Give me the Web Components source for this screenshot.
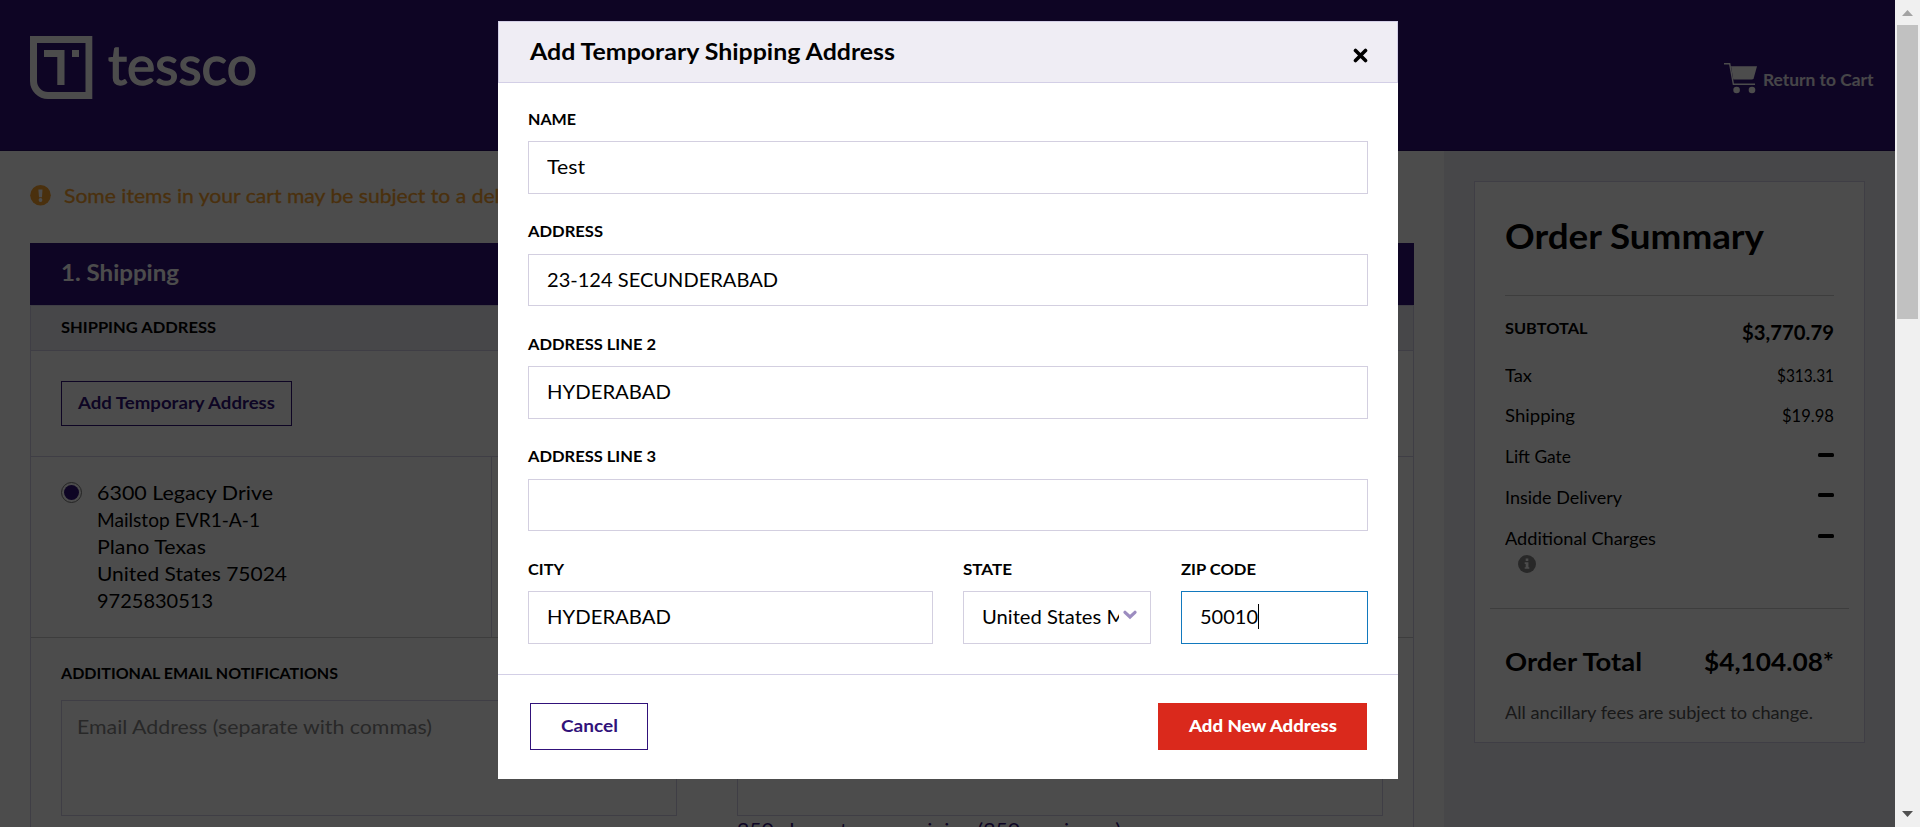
<!DOCTYPE html>
<html lang="en">
<head>
<meta charset="utf-8">
<title>Tessco Checkout</title>
<style>
html,body{margin:0;height:827px;overflow:hidden;background:#fff}
body{font-family:Lato,"Open Sans",sans-serif;color:#000;font-size:20px}
</style>
</head>
<body>
<checkout-app></checkout-app>
<script>
const define = (name, html, ready) => {
  const t = document.createElement('template');
  t.innerHTML = html;
  customElements.define(name, class extends HTMLElement {
    connectedCallback() {
      if (this.shadowRoot) return;
      this.attachShadow({mode:'open'}).append(t.content.cloneNode(true));
      if (ready) ready(this, this.shadowRoot);
    }
  });
};

// Stretches a run of text to the requested width.
define('fit-text', `<style>:host{display:block;white-space:pre;flex:none}span{display:inline-block;transform-origin:0 50%;vertical-align:top}</style><span><slot></slot></span>`,
  (el, root) => {
    const s = root.querySelector('span');
    const w = +el.getAttribute('w');
    const natural = s.getBoundingClientRect().width;
    el.style.width = w + 'px';
    s.style.transform = 'scaleX(' + w / natural + ')';
  });

define('ui-button', `<style>
:host{display:flex;box-sizing:border-box;align-items:center;justify-content:center;border:1px solid #31127a;color:#31127a;font-weight:700;font-size:17.5px;line-height:20px;padding-bottom:1px}
:host([primary]){background:#da291c;border-color:#da291c;color:#fff;font-weight:900}
</style><slot></slot>`);

define('site-header', `<style>
:host{display:flex;box-sizing:border-box;height:151px;background:#31127a;padding:36px 22px 0 30px;color:#fff;border-bottom:1px solid #260c63}
.mark{display:block;width:63px;height:63px}
.word{font-size:54px;line-height:60px;font-weight:400;-webkit-text-stroke:1.3px #fff;margin:-1px 0 0 15px}
.cart{display:flex;margin:27px 0 0 auto;height:31px}
.cart fit-text{font-size:17.5px;font-weight:700;line-height:20px;margin:7px 0 0 6px;color:#ece9f2}
</style>
<svg class="mark" viewBox="0 0 63 63" fill="#fff"><path fill-rule="evenodd" d="M0 0H62.3V63H18A18 18 0 0 1 0 45ZM7 7V45A11 11 0 0 0 18 56H55.5V7Z"/><path d="M14 14H34.5V49H27.3V21H14ZM42 14H49V21H42Z"/></svg>
<fit-text class="word" w="149">tessco</fit-text>
<div class="cart">
<svg width="33" height="31" viewBox="0 0 33 31" fill="#fff"><path d="M0 .8H5.7L9.4 21.3H31" fill="none" stroke="#fff" stroke-width="1.4"/><path d="M7 3.3H33L29.7 15.2Q29.2 16.6 27.5 16.6H9.3Z"/><circle cx="12.6" cy="27" r="3.3"/><circle cx="28" cy="27" r="3.3"/></svg>
<fit-text w="110.5">Return to Cart</fit-text></div>`);

define('cart-alert', `<style>
:host{display:flex;height:92px;box-sizing:border-box;padding-top:34px;color:#f7a12d}
fit-text{margin-left:12.5px;line-height:26px;margin-top:-3px;-webkit-text-stroke:.3px #f7a12d}
</style>
<svg width="21" height="21" viewBox="0 0 21 21"><circle cx="10.5" cy="10.3" r="10.3" fill="#f7a12d"/><path d="M8.4 4.6H12.5L12 12.2H9Z" fill="#fff"/><circle cx="10.5" cy="15" r="1.9" fill="#fff"/></svg>
<fit-text w="461">Some items in your cart may be subject to a delay.</fit-text>`);

define('shipping-panel', `<style>
:host{display:flex;flex-direction:column;height:700px;color:#000}
.bar{background:#31127a;color:#fff;height:62px;box-sizing:border-box;padding:17px 31px;font-size:22.5px;font-weight:700;line-height:26px}
.box{flex:1;border:1px solid #d3cfe6;display:flex;flex-direction:column}
.sub{height:44px;background:#efedf4;border-bottom:1px solid #d3cfe6;padding-left:30px;font-size:16px;font-weight:700;line-height:41px;flex:none;box-sizing:border-box;height:45px}
.add{height:105px;border-bottom:1px solid #d3cfe6;flex:none;padding-left:30px}
ui-button{width:231px;height:45px;margin-top:30px}
.list{display:grid;grid-template-columns:461px 1fr;height:180px;border-bottom:1px solid #ccc;flex:none}
.card{display:flex;border-right:1px solid #d3cfe6;padding:22px 0 0 30px}
.lines{display:flex;flex-direction:column;align-items:flex-start;line-height:27px;margin-left:15px}
.radio{width:21px;height:21px;box-sizing:border-box;border:1px solid #767676;border-radius:50%;display:grid;place-items:center;margin-top:3px}
.radio i{width:15px;height:15px;border-radius:50%;background:#31127a}
.notes{display:grid;grid-template-columns:616px 646px;column-gap:60px;padding:25px 30px 0;align-items:start}
.lab{height:37px;font-size:16px;font-weight:700;line-height:20px}
.area{height:116px;box-sizing:border-box;border:1px solid #d3cfe6;padding:12px 15px;color:#888;line-height:26px}
.count{line-height:26px;color:#31127a}
</style>
<div class="bar"><fit-text w="118">1. Shipping</fit-text></div>
<div class="box">
<div class="sub"><fit-text w="155">SHIPPING ADDRESS</fit-text></div>
<div class="add"><ui-button><fit-text w="197">Add Temporary Address</fit-text></ui-button></div>
<div class="list"><div class="card"><span class="radio"><i></i></span><div class="lines">
<fit-text w="176">6300 Legacy Drive</fit-text><fit-text w="163">Mailstop EVR1-A-1</fit-text><fit-text w="109">Plano Texas</fit-text><fit-text w="190">United States 75024</fit-text><fit-text w="116">9725830513</fit-text></div></div></div>
<div class="notes"><div><div class="lab"><fit-text w="277">ADDITIONAL EMAIL NOTIFICATIONS</fit-text></div><div class="area"><fit-text w="355">Email Address (separate with commas)</fit-text></div></div>
<div><div class="lab"></div><div class="area"></div><div class="count"><fit-text w="384">250 characters remaining (250 maximum)</fit-text></div></div></div>
</div>`);

define('summary-row', `<style>
:host{display:flex;justify-content:space-between;font-size:17px;line-height:20px;height:40.8px}
i{width:16px;height:4px;border-radius:1.5px;background:#000;margin-top:5.5px}
</style><slot></slot><slot name="value"><i></i></slot>`);

define('order-summary', `<style>
:host{display:block;box-sizing:border-box;width:391px;height:562px;border:1px solid #d3cfe6;background:#fff;padding:0 30px}
h2{margin:0;height:113px;box-sizing:border-box;padding-top:34px;font-size:34px;line-height:40px;font-weight:700}
hr{border:0;height:1px;background:#ccc;margin:0}
.top{height:53px;box-sizing:border-box;padding-top:22px;display:flex;justify-content:space-between;font-weight:700;line-height:20px;font-size:16px;margin-bottom:16.5px}
.top .v{font-size:20px;line-height:24px;margin-top:1.5px}
.info{display:block;margin:-14px 0 0 13px}
.wide{margin:34.5px -15px 0}
.tot{display:flex;justify-content:space-between;font-weight:700;font-size:25.5px;line-height:30px;padding-top:37.5px}
.fees{font-size:17px;line-height:20px;margin-top:27px;color:#555}
</style>
<h2><fit-text w="259">Order Summary</fit-text></h2><hr>
<div class="top"><fit-text w="82.5">SUBTOTAL</fit-text><fit-text class="v" w="92">$3,770.79</fit-text></div>
<div class="rows">
<summary-row><fit-text w="27">Tax</fit-text><fit-text slot="value" w="57">$313.31</fit-text></summary-row>
<summary-row><fit-text w="70">Shipping</fit-text><fit-text slot="value" w="52">$19.98</fit-text></summary-row>
<summary-row><fit-text w="66">Lift Gate</fit-text></summary-row>
<summary-row><fit-text w="117">Inside Delivery</fit-text></summary-row>
<summary-row><fit-text w="151">Additional Charges</fit-text></summary-row></div>
<svg class="info" width="18" height="18" viewBox="0 0 18 18"><circle cx="9" cy="9" r="9" fill="#888"/><path d="M7.7 3.5H10.3V6H7.7ZM6.7 7.3H10.4V12.2H11.3V13.8H6.7V12.2H7.7V8.9H6.7Z" fill="#fff"/></svg>
<hr class="wide">
<div class="tot"><fit-text w="137">Order Total</fit-text><fit-text w="130">$4,104.08*</fit-text></div>
<div class="fees"><fit-text w="308">All ancillary fees are subject to change.</fit-text></div>`);

define('form-field', `<style>
:host{display:block}
.l{height:32.4px;margin-top:-.4px;font-size:16px;font-weight:700;line-height:20px}
.b{display:flex;align-items:center;height:52.5px;box-sizing:border-box;border:1px solid #d3cfe0;padding:0 18px 2px;line-height:26px}
:host([focus]) .b{border-color:#1279be}
:host([select]) .b{padding-right:13px}
.v{flex:1;display:flex;align-items:center;min-width:0;overflow:hidden;white-space:nowrap}
:host([focus]) .v::after{content:"";width:1px;height:25px;background:#000}
svg{display:none;margin:-2px 0 0 4px;flex:none}
:host([select]) svg{display:block}
</style><div class="l"><slot name="label"></slot></div>
<div class="b"><div class="v"><slot></slot></div><svg width="14" height="10" viewBox="0 0 14 10"><path d="M2 2.3 7 7 12 2.3" fill="none" stroke="#9c8cc0" stroke-width="3.2" stroke-linecap="round"/></svg></div>`);

define('address-modal', `<style>
:host{display:flex;flex-direction:column;width:900px;height:758px;background:#fff;color:#000}
header{display:flex;justify-content:space-between;height:62px;box-sizing:border-box;border:1px solid #d3cfe6;background:#efedf4;padding:16px 29px 0 31px;font-size:23px;font-weight:700;line-height:26px}
header svg{margin-top:9.5px}
.body{display:flex;flex-direction:column;gap:28px;height:565px;padding:26px 30px 0;border-bottom:1px solid #d3cfe6}
.row{display:grid;grid-template-columns:405px 188px 187px;gap:30px}
footer{display:flex;justify-content:space-between;padding:28px 31px 0 32px}
.c{width:118px;height:47px}.p{width:209px;height:47px}
</style>
<header><fit-text w="365">Add Temporary Shipping Address</fit-text><svg width="15" height="15" viewBox="0 0 15 15"><path d="M2.5 2.5 12.5 12.5M12.5 2.5 2.5 12.5" stroke="#000" stroke-width="3.6" stroke-linecap="round"/></svg></header>
<div class="body">
<form-field><fit-text slot="label" w="48">NAME</fit-text><fit-text w="38">Test</fit-text></form-field>
<form-field><fit-text slot="label" w="75">ADDRESS</fit-text><fit-text w="231">23-124 SECUNDERABAD</fit-text></form-field>
<form-field><fit-text slot="label" w="128">ADDRESS LINE 2</fit-text><fit-text w="124">HYDERABAD</fit-text></form-field>
<form-field><fit-text slot="label" w="128">ADDRESS LINE 3</fit-text></form-field>
<div class="row">
<form-field><fit-text slot="label" w="36">CITY</fit-text><fit-text w="124">HYDERABAD</fit-text></form-field>
<form-field select><fit-text slot="label" w="49">STATE</fit-text><fit-text w="178">United States Minor</fit-text></form-field>
<form-field focus><fit-text slot="label" w="75">ZIP CODE</fit-text><fit-text w="58">50010</fit-text></form-field>
</div></div>
<footer><ui-button class="c"><fit-text w="57">Cancel</fit-text></ui-button><ui-button class="p" primary><fit-text w="148">Add New Address</fit-text></ui-button></footer>`);

define('scroll-rail', `<style>
:host{display:flex;flex-direction:column;align-items:center;background:#f0f0f0;box-sizing:border-box;height:827px;padding:10px 0}
.thumb{width:21px;height:294px;background:#c1c1c1;margin-top:9px}
.down{margin-top:auto}
</style>
<svg width="11" height="6"><path d="M0 6 5.5 0 11 6Z" fill="#a3a3a3"/></svg><div class="thumb"></div>
<svg class="down" width="11" height="6"><path d="M0 0 5.5 6 11 0Z" fill="#505050"/></svg>`);

define('checkout-app', `<style>
:host{display:grid;grid-template-columns:1895px 25px;height:827px;overflow:hidden}
.page{position:relative;height:827px;overflow:hidden;background:#fff}
.cols{display:grid;grid-template-columns:1444px 451px}
.main{padding:0 30px;height:676px;overflow:hidden}
.side{background:#efedf4;padding:30px}
.shade{position:absolute;inset:0;background:rgba(0,0,0,.7);display:flex;align-items:flex-start;justify-content:center;padding-top:21px}
address-modal{margin-left:1px}
</style>
<div class="page"><site-header></site-header>
<div class="cols"><div class="main"><cart-alert></cart-alert><shipping-panel></shipping-panel></div><div class="side"><order-summary></order-summary></div></div>
<div class="shade"><address-modal></address-modal></div></div>
<scroll-rail></scroll-rail>`);
</script>
</body>
</html>
